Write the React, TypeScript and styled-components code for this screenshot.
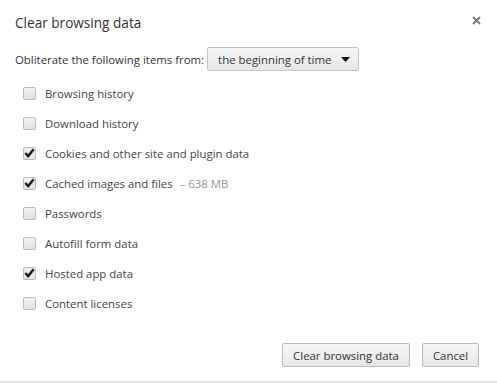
import { FC } from "react";
import styled, { createGlobalStyle } from "styled-components";

const Global = createGlobalStyle`
  html, body {
    margin: 0;
    padding: 0;
    background: #fff;
  }
  body {
    font-family: "Open Sans", "Noto Sans", sans-serif;
    color: #333;
  }
`;

const Dialog = styled.div`
  width: 497px;
  height: 383px;
  box-sizing: border-box;
  background: #fff;
  border-bottom: 2px solid #e4e4e4;
  display: flex;
  flex-direction: column;
`;

const Header = styled.div`
  display: flex;
  justify-content: space-between;
  align-items: flex-start;
  padding: 13px 16px 0 15px;
`;

const Title = styled.h1`
  margin: 0;
  font-size: 13.6px;
  font-weight: 400;
  color: #333;
`;

const Close = styled.button`
  border: 0;
  background: none;
  padding: 0;
  margin-top: 3px;
  width: 9px;
  height: 9px;
  cursor: pointer;
  display: flex;
`;

const FromRow = styled.div`
  display: flex;
  align-items: center;
  gap: 3px;
  padding: 15px 0 0 15px;
  font-size: 11.4px;
  white-space: nowrap;
`;

const Select = styled.div`
  display: flex;
  align-items: center;
  justify-content: space-between;
  box-sizing: border-box;
  width: 152px;
  height: 24px;
  padding: 0 8px 0 10px;
  border: 1px solid #c4c4c4;
  border-radius: 2px;
  background: linear-gradient(#f6f6f6, #e6e6e6);
  font-size: 11.4px;
  color: #333;
`;

const List = styled.div`
  display: flex;
  flex-direction: column;
  padding: 7px 0 0 23px;
`;

const Row = styled.label`
  display: flex;
  align-items: center;
  height: 30px;
  gap: 9px;
  font-size: 11.4px;
  color: #444;
`;

const Box = styled.span`
  width: 13px;
  height: 13px;
  box-sizing: border-box;
  border: 1px solid #bbb;
  border-radius: 2px;
  background: linear-gradient(#f2f2f2, #e2e2e2);
  display: flex;
  align-items: center;
  justify-content: center;
`;

const Size = styled.span`
  color: #999;
  margin-left: 7px;
`;

const Footer = styled.div`
  margin-top: auto;
  display: flex;
  justify-content: flex-end;
  gap: 12px;
  padding: 0 18px 14px 0;
`;

const Button = styled.button<{ $w: number }>`
  width: ${(p) => p.$w}px;
  height: 24px;
  border: 1px solid #bbb;
  border-radius: 2px;
  background: linear-gradient(#f7f7f7, #e6e6e6);
  font-family: "Open Sans", "Noto Sans", sans-serif;
  font-size: 11.4px;
  color: #333;
  padding: 0;
`;

const Check: FC = () => (
  <svg width="11" height="10" viewBox="0 0 11 10">
    <path d="M1.3 5 L4.2 8 L9.6 1.2" stroke="#1a1a1a" strokeWidth="2.5" fill="none" />
  </svg>
);

const items = [
  { label: "Browsing history", checked: false },
  { label: "Download history", checked: false },
  { label: "Cookies and other site and plugin data", checked: true },
  { label: "Cached images and files", checked: true, size: "–  638 MB" },
  { label: "Passwords", checked: false },
  { label: "Autofill form data", checked: false },
  { label: "Hosted app data", checked: true },
  { label: "Content licenses", checked: false },
];

export default function App() {
  return (
    <>
      <Global />
      <Dialog>
        <Header>
          <Title>Clear browsing data</Title>
          <Close aria-label="Close">
            <svg width="9" height="9" viewBox="0 0 9 9">
              <path d="M1 1 L8 8 M8 1 L1 8" stroke="#777" strokeWidth="1.8" />
            </svg>
          </Close>
        </Header>
        <FromRow>
          <span>Obliterate the following items from:</span>
          <Select>
            <span>the beginning of time</span>
            <svg width="9" height="5" viewBox="0 0 9 5">
              <path d="M0 0 H9 L4.5 5 Z" fill="#111" />
            </svg>
          </Select>
        </FromRow>
        <List>
          {items.map((it) => (
            <Row key={it.label}>
              <Box>{it.checked && <Check />}</Box>
              <span>
                {it.label}
                {it.size && <Size>{it.size}</Size>}
              </span>
            </Row>
          ))}
        </List>
        <Footer>
          <Button $w={128}>Clear browsing data</Button>
          <Button $w={57}>Cancel</Button>
        </Footer>
      </Dialog>
    </>
  );
}
